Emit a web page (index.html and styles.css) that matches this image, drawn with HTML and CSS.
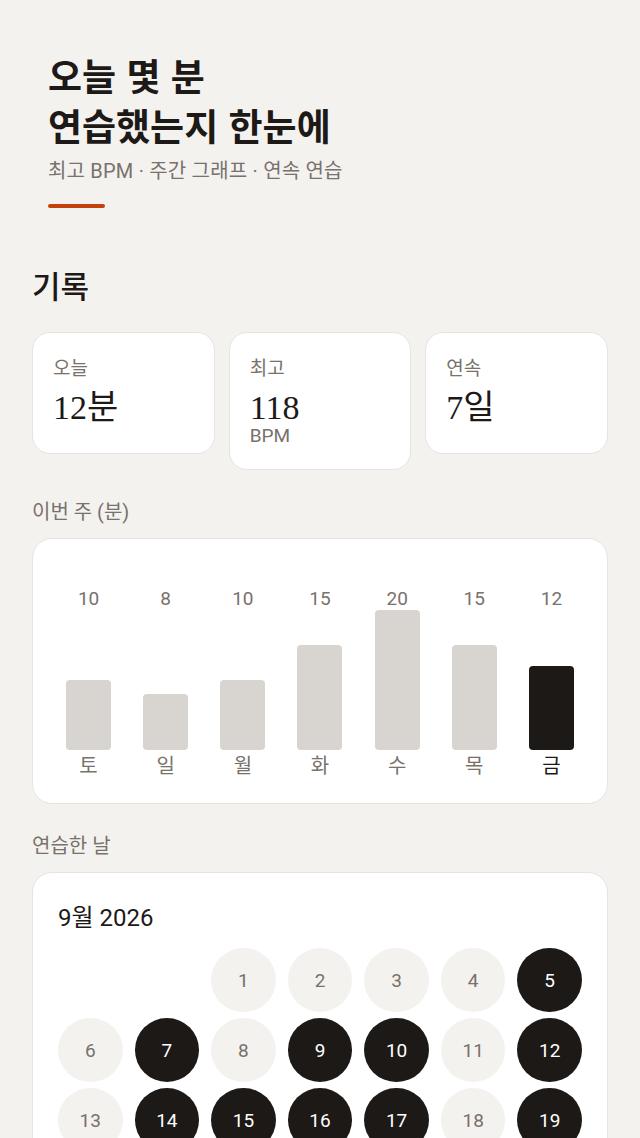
FILE: index.html
```html
<!DOCTYPE html>
<html lang="ko">
<head>
<meta charset="utf-8">
<title>연습 기록</title>
<link rel="stylesheet" href="styles.css">
</head>
<body>
<main class="page">
  <header class="hero">
    <h1 class="hero-title">오늘 몇 분<br>연습했는지 한눈에</h1>
    <p class="hero-sub">최고 BPM · 주간 그래프 · 연속 연습</p>
    <div class="hero-accent"></div>
  </header>

  <h2 class="section-title">기록</h2>

  <section class="stats">
    <div class="stat-card">
      <div class="stat-label">오늘</div>
      <div class="stat-value">12분</div>
    </div>
    <div class="stat-card">
      <div class="stat-label">최고</div>
      <div class="stat-value">118</div>
      <div class="stat-unit">BPM</div>
    </div>
    <div class="stat-card">
      <div class="stat-label">연속</div>
      <div class="stat-value">7일</div>
    </div>
  </section>

  <div class="block-label">이번 주 (분)</div>
  <section class="card chart">
    <div class="col"><span class="col-num">10</span><div class="bar-area"><div class="bar" style="height:70px"></div></div><span class="col-day">토</span></div>
    <div class="col"><span class="col-num">8</span><div class="bar-area"><div class="bar" style="height:56px"></div></div><span class="col-day">일</span></div>
    <div class="col"><span class="col-num">10</span><div class="bar-area"><div class="bar" style="height:70px"></div></div><span class="col-day">월</span></div>
    <div class="col"><span class="col-num">15</span><div class="bar-area"><div class="bar" style="height:105px"></div></div><span class="col-day">화</span></div>
    <div class="col"><span class="col-num">20</span><div class="bar-area"><div class="bar" style="height:140px"></div></div><span class="col-day">수</span></div>
    <div class="col"><span class="col-num">15</span><div class="bar-area"><div class="bar" style="height:105px"></div></div><span class="col-day">목</span></div>
    <div class="col today"><span class="col-num">12</span><div class="bar-area"><div class="bar" style="height:84px"></div></div><span class="col-day">금</span></div>
  </section>

  <div class="block-label">연습한 날</div>
  <section class="card calendar">
    <div class="cal-title">9월 2026</div>
    <div class="cal-grid">
      <span class="blank"></span><span class="blank"></span>
      <span class="day">1</span><span class="day">2</span><span class="day">3</span><span class="day">4</span><span class="day on">5</span>
      <span class="day">6</span><span class="day on">7</span><span class="day">8</span><span class="day on">9</span><span class="day on">10</span><span class="day">11</span><span class="day on">12</span>
      <span class="day">13</span><span class="day on">14</span><span class="day on">15</span><span class="day on">16</span><span class="day on">17</span><span class="day">18</span><span class="day on">19</span>
      <span class="day">20</span><span class="day on">21</span><span class="day">22</span><span class="day on">23</span><span class="day on">24</span><span class="day on">25</span><span class="day">26</span>
      <span class="day">27</span><span class="day">28</span><span class="day">29</span><span class="day">30</span>
    </div>
  </section>
</main>
</body>
</html>
```

FILE: styles.css
```css
* { box-sizing: border-box; }

html, body {
  margin: 0;
  padding: 0;
  background: #f4f2ef;
}

body {
  font-family: Roboto, "Noto Sans CJK KR", sans-serif;
  color: #1c1917;
}

.page {
  padding: 50px 32px 40px;
}

.hero {
  padding: 0 16px;
}

.hero-title {
  margin: 0;
  font-family: "Noto Sans CJK KR", sans-serif;
  font-size: 37px;
  font-weight: 700;
  line-height: 50px;
  color: #1c1917;
}

.hero-sub {
  margin: 8px 0 0;
  font-size: 20px;
  line-height: 26px;
  letter-spacing: 0.2px;
  color: #78716c;
}

.hero-accent {
  margin-top: 20px;
  width: 57px;
  height: 4px;
  border-radius: 2px;
  background: #c2410c;
}

.section-title {
  margin: 57px 0 0;
  font-family: "Noto Sans CJK KR", sans-serif;
  font-size: 31px;
  font-weight: 500;
  line-height: 40px;
  color: #1c1917;
}

.stats {
  margin-top: 27px;
  display: grid;
  grid-template-columns: repeat(3, 1fr);
  gap: 14px;
  align-items: start;
}

.stat-card {
  background: #fff;
  border: 1px solid #e7e4e0;
  border-radius: 18px;
  padding: 24px 20px 27px;
}

.stat-label {
  font-size: 19px;
  line-height: 24px;
  color: #78716c;
}

.stat-value {
  margin-top: 9px;
  font-family: "Liberation Serif", "Noto Sans CJK KR", serif;
  font-size: 34px;
  line-height: 36px;
  color: #1c1917;
}

.stat-unit {
  font-size: 19px;
  line-height: 20px;
  margin-bottom: -4px;
  color: #78716c;
}

.block-label {
  margin-top: 29px;
  font-size: 20px;
  line-height: 26px;
  color: #78716c;
}

.card {
  margin-top: 13px;
  background: #fff;
  border: 1px solid #e7e4e0;
  border-radius: 20px;
}

.chart {
  display: grid;
  grid-template-columns: repeat(7, 1fr);
  padding: 49px 17px 26px;
}

.col {
  display: flex;
  flex-direction: column;
  align-items: center;
}

.col-num {
  font-size: 19px;
  line-height: 22px;
  color: #78716c;
}

.bar-area {
  height: 140px;
  width: 100%;
  display: flex;
  align-items: flex-end;
  justify-content: center;
}

.bar {
  width: 45px;
  border-radius: 4px;
  background: #d8d4d0;
}

.col-day {
  margin-top: 5px;
  font-size: 20px;
  line-height: 22px;
  color: #78716c;
}

.today .bar { background: #1c1917; }
.today .col-day { color: #1c1917; }

.calendar {
  padding: 30px 25px 24px;
}

.cal-title {
  font-size: 24px;
  line-height: 30px;
  color: #1c1917;
}

.cal-grid {
  margin-top: 15px;
  display: grid;
  grid-template-columns: repeat(7, 1fr);
  column-gap: 12px;
  row-gap: 6px;
}

.day {
  height: 64px;
  border-radius: 50%;
  display: flex;
  align-items: center;
  justify-content: center;
  background: #f4f2ef;
  font-size: 19px;
  color: #78716c;
}

.day.on {
  background: #1c1917;
  color: #fff;
}
```
